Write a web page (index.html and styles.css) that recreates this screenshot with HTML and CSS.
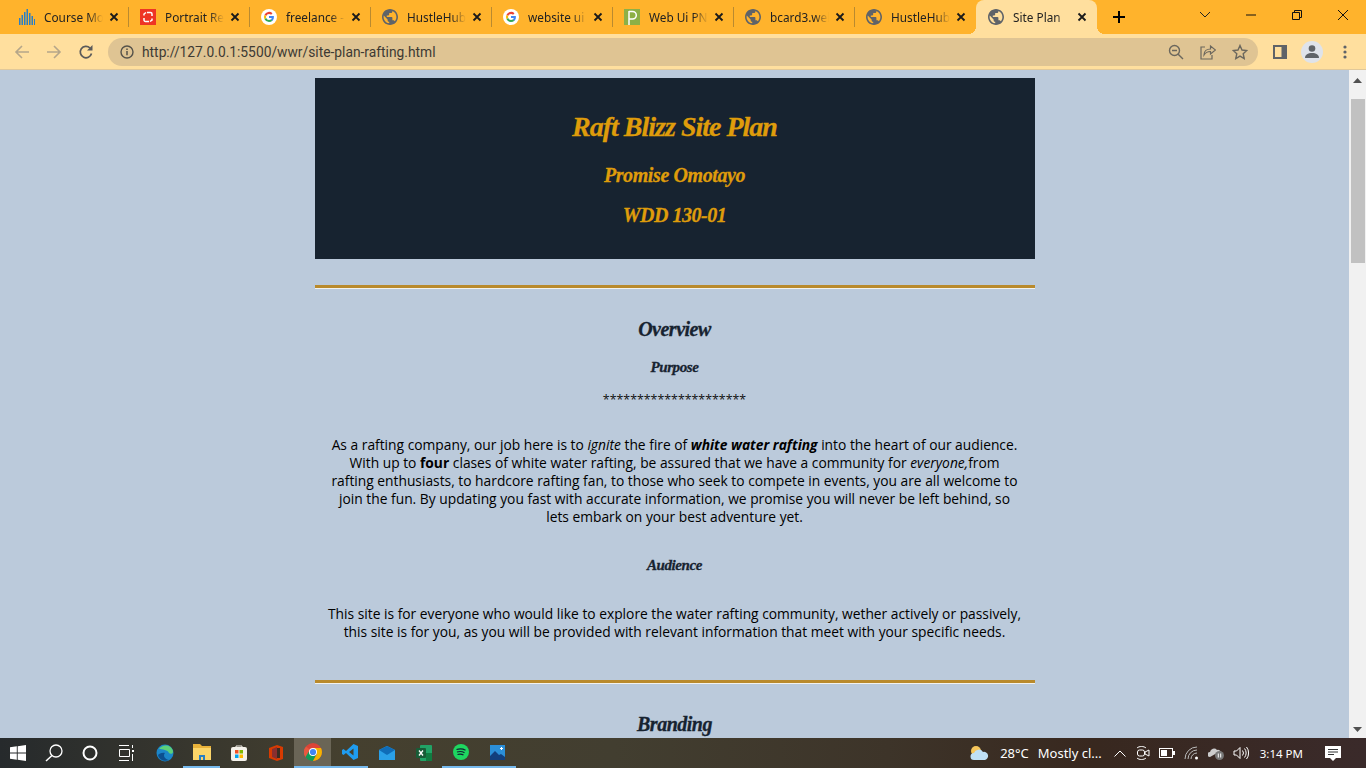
FILE: index.html
```html
<!DOCTYPE html>
<html lang="en">
<head>
  <meta charset="UTF-8">
  <meta name="viewport" content="width=device-width, initial-scale=1.0">
  <link rel="stylesheet" href="styles.css">
  <title>Site Plan</title>
</head>
<body>

<svg class="sprites" width="0" height="0">
  <symbol id="globe" viewBox="2 2 20 20">
    <path d="M12 2C6.48 2 2 6.48 2 12s4.48 10 10 10 10-4.48 10-10S17.52 2 12 2zm-1 17.93c-3.95-.49-7-3.85-7-7.93 0-.62.08-1.21.21-1.79L9 15v1c0 1.100.9 2 2 2v1.930zm6.900-2.540c-.26-.81-1-1.390-1.900-1.390h-1v-3c0-.55-.45-1-1-1H8v-2h2c.55 0 1-.45 1-1V7h2c1.100 0 2-.9 2-2v-.41c2.930 1.190 5 4.060 5 7.410 0 2.080-.8 3.970-2.100 5.390z" fill="#5f6368"/>
  </symbol>
  <symbol id="close" viewBox="0 0 10 10">
    <path d="M1.500 1.500l7 7M8.500 1.500l-7 7" stroke="#1a1a1a" stroke-width="1.800" fill="none"/>
  </symbol>
  <symbol id="google" viewBox="0 0 16 16">
    <circle cx="8" cy="8" r="8" fill="#fff"/>
    <path d="M8 4.900c.9 0 1.600.3 2.100.8l1.400-1.400A5 5 0 0 0 3.500 5.700l1.700 1.300A3 3 0 0 1 8 4.900z" fill="#ea4335"/>
    <path d="M12.900 8.100c0-.4 0-.7-.1-1H8v2h2.800c-.1.600-.5 1.200-1 1.500l1.600 1.300c.9-.9 1.500-2.200 1.500-3.800z" fill="#4285f4"/>
    <path d="M5.200 9A3 3 0 0 1 5.200 7L3.500 5.700a5 5 0 0 0 0 4.600z" fill="#fbbc05"/>
    <path d="M8 13c1.400 0 2.500-.4 3.400-1.200l-1.600-1.300c-.5.300-1.100.5-1.800.5A3 3 0 0 1 5.200 9l-1.700 1.300A5 5 0 0 0 8 13z" fill="#34a853"/>
  </symbol>
</svg>

<div class="tabstrip">
  <div class="tab">
    <svg class="favicon" viewBox="0 0 16 16"><path d="M0 9h1.500v7H0zM2.500 6H4v10H2.500zM5 3h1.500v13H5zM7.500 0H9v16H7.500zM10 4h1.500v12H10zM12.500 7H14v9h-1.500zM15 10h1v6h-1z" fill="#2a7fc4"/></svg>
    <span class="tab-title">Course Mo</span>
    <svg class="tab-close"><use href="#close"/></svg>
  </div>
  <div class="tab">
    <svg class="favicon" viewBox="0 0 16 16"><rect width="16" height="16" fill="#ee3524"/><path d="M7 3.500h3.500a1.500 1.500 0 0 1 1.500 1.500v2M9 12.500H5.500A1.500 1.500 0 0 1 4 11V9M4 6.500V5l2-1.500M12 9.500V11l-2 1.500" stroke="#fff" stroke-width="1.500" fill="none"/></svg>
    <span class="tab-title">Portrait Re</span>
    <svg class="tab-close"><use href="#close"/></svg>
  </div>
  <div class="tab">
    <svg class="favicon"><use href="#google"/></svg>
    <span class="tab-title">freelance -</span>
    <svg class="tab-close"><use href="#close"/></svg>
  </div>
  <div class="tab">
    <svg class="favicon"><use href="#globe"/></svg>
    <span class="tab-title">HustleHub</span>
    <svg class="tab-close"><use href="#close"/></svg>
  </div>
  <div class="tab">
    <svg class="favicon"><use href="#google"/></svg>
    <span class="tab-title">website ui</span>
    <svg class="tab-close"><use href="#close"/></svg>
  </div>
  <div class="tab">
    <svg class="favicon" viewBox="0 0 16 16"><rect width="16" height="16" fill="#8db046"/><path d="M5 16V2" stroke="#fff" stroke-width="1.500"/><path d="M5 2.500h3.500a3.800 3.800 0 0 1 0 7.600H5" stroke="#fff" stroke-width="1.500" fill="none"/></svg>
    <span class="tab-title">Web Ui PN</span>
    <svg class="tab-close"><use href="#close"/></svg>
  </div>
  <div class="tab">
    <svg class="favicon"><use href="#globe"/></svg>
    <span class="tab-title">bcard3.wel</span>
    <svg class="tab-close"><use href="#close"/></svg>
  </div>
  <div class="tab tab-last">
    <svg class="favicon"><use href="#globe"/></svg>
    <span class="tab-title">HustleHub</span>
    <svg class="tab-close"><use href="#close"/></svg>
  </div>
  <div class="tab tab-active">
    <svg class="favicon"><use href="#globe"/></svg>
    <span class="tab-title">Site Plan</span>
    <svg class="tab-close"><use href="#close"/></svg>
  </div>
  <svg class="new-tab" viewBox="0 0 12 12"><path d="M6 0v12M0 6h12" stroke="#000" stroke-width="2"/></svg>
  <div class="window-controls">
    <svg class="win-btn" viewBox="0 0 46 20"><path d="M18 10l5 5 5-5" transform="translate(0 -3)" stroke="#222" fill="none"/></svg>
    <svg class="win-btn" viewBox="0 0 46 20"><path d="M18 10h10" stroke="#111" fill="none"/></svg>
    <svg class="win-btn" viewBox="0 0 46 20"><path d="M18.500 7.500h7v7h-7zM20.500 7.500v-2h7v7h-2" stroke="#111" fill="none"/></svg>
    <svg class="win-btn" viewBox="0 0 46 20"><path d="M18 5l10 10M28 5l-10 10" stroke="#111" fill="none"/></svg>
  </div>
</div>

<div class="toolbar">
  <svg class="nav-icon" viewBox="0 0 16 16"><path d="M15 8H2M8 2L2 8l6 6" stroke="#b5a68a" stroke-width="1.600" fill="none"/></svg>
  <svg class="nav-icon" viewBox="0 0 16 16"><path d="M1 8h13M8 2l6 6-6 6" stroke="#b5a68a" stroke-width="1.600" fill="none"/></svg>
  <svg class="nav-icon" viewBox="0 0 16 16"><path d="M13.500 9.500A5.700 5.700 0 1 1 12 4" stroke="#5a5a5a" stroke-width="1.700" fill="none"/><path d="M14.500 1v5.500H9z" fill="#5a5a5a"/></svg>
  <div class="omnibox">
    <svg class="info-icon" viewBox="0 0 14 14"><circle cx="7" cy="7" r="6" stroke="#55524a" stroke-width="1.400" fill="none"/><path d="M7 6v4.200M7 3.500v1.400" stroke="#55524a" stroke-width="1.500"/></svg>
    <span class="url">http://127.0.0.1:5500/wwr/site-plan-rafting.html</span>
    <svg class="omni-icon" viewBox="0 0 16 16"><circle cx="6.500" cy="6.500" r="5" stroke="#6b675d" stroke-width="1.400" fill="none"/><path d="M4 6.500h5M10.200 10.200L15 15" stroke="#6b675d" stroke-width="1.400"/></svg>
    <svg class="omni-icon" viewBox="0 0 16 16"><path d="M5 3H1v12h11v-4" stroke="#6b675d" stroke-width="1.200" fill="none"/><path d="M4 11c0-4 3-6 6.500-6V2L15.500 6l-5 4V7.500C8 7.500 5.500 8.500 4 11z" stroke="#6b675d" stroke-width="1.200" fill="none"/></svg>
    <svg class="omni-icon" viewBox="0 0 16 16"><path d="M8 1.500l2 4.500 4.800.5-3.600 3.200 1 4.800L8 12.100l-4.200 2.400 1-4.800L1.200 6.500 6 6z" stroke="#6b675d" stroke-width="1.400" fill="none"/></svg>
  </div>
  <svg class="side-panel" viewBox="0 0 14 14"><path d="M0 0h14v14H0z" fill="#5f6368"/><path d="M2 2h6.500v10H2z" fill="#ffdf9e"/></svg>
  <div class="avatar">
    <svg viewBox="0 0 14 14" width="14" height="14"><circle cx="7" cy="3.500" r="3.300" fill="#5f6368"/><path d="M0 13c0-3.500 3-5 7-5s7 1.500 7 5z" fill="#5f6368"/></svg>
  </div>
  <svg class="kebab" viewBox="0 0 4 14"><circle cx="2" cy="2" r="1.600" fill="#5f6368"/><circle cx="2" cy="7" r="1.600" fill="#5f6368"/><circle cx="2" cy="12" r="1.600" fill="#5f6368"/></svg>
</div>

<div class="viewport">
  <main class="page">
    <header class="site-header">
      <h1>Raft Blizz Site Plan</h1>
      <h2 class="author">Promise Omotayo</h2>
      <h2 class="course">WDD 130-01</h2>
    </header>

    <hr class="rule">

    <section class="overview">
      <h2 class="section-title">Overview</h2>
      <h3>Purpose</h3>
      <p class="stars">*********************</p>
      <p class="copy">As a rafting company, our job here is to <em>ignite</em> the fire of <strong><em>white water rafting</em></strong> into the heart of our audience. With up to <strong>four</strong> clases of white water rafting, be assured that we have a community for <em>everyone,</em>from rafting enthusiasts, to hardcore rafting fan, to those who seek to compete in events, you are all welcome to join the fun. By updating you fast with accurate information, we promise you will never be left behind, so lets embark on your best adventure yet.</p>
      <h3 class="audience">Audience</h3>
      <p class="copy audience-copy">This site is for everyone who would like to explore the water rafting community, wether actively or passively, this site is for you, as you will be provided with relevant information that meet with your specific needs.</p>
    </section>

    <hr class="rule rule-2">

    <h2 class="section-title">Branding</h2>
  </main>

  <div class="scrollbar">
    <svg class="arrow" viewBox="0 0 9 5"><path d="M0 5l4.500-5L9 5z" fill="#505050"/></svg>
    <div class="thumb"></div>
    <svg class="arrow" viewBox="0 0 9 5"><path d="M0 0l4.500 5L9 0z" fill="#505050"/></svg>
  </div>
</div>

<div class="taskbar">
  <div class="sys-btn">
    <svg width="16" height="16" viewBox="0 0 16 16"><path d="M0 2.300l6.800-1v6.300H0zM7.700 1.200L16 0v7.600H7.700zM0 8.400h6.800v6.300l-6.800-1zM7.700 8.400H16V16l-8.300-1.200z" fill="#fff"/></svg>
  </div>
  <div class="sys-btn">
    <svg width="18" height="18" viewBox="0 0 18 18"><circle cx="11" cy="7" r="6" stroke="#fff" stroke-width="1.300" fill="none"/><path d="M7 11.500L1 17" stroke="#fff" stroke-width="1.500"/></svg>
  </div>
  <div class="sys-btn">
    <svg width="16" height="16" viewBox="0 0 16 16"><circle cx="8" cy="8" r="6.500" stroke="#fff" stroke-width="2" fill="none"/></svg>
  </div>
  <div class="sys-btn">
    <svg width="16" height="16" viewBox="0 0 16 16"><path d="M1 .5h10M1 15.500h10M1.500 4.500h10v7h-10z" stroke="#fff" fill="none"/><path d="M14 5h2v2h-2z" fill="#fff"/><path d="M14.500 0v3M14.500 9v7" stroke="#fff"/></svg>
  </div>
  <div class="app-list">
    <div class="app">
      <svg width="18" height="18" viewBox="0 0 18 18"><circle cx="9" cy="9" r="8.500" fill="#1b86c9"/><path d="M3 5c3-5 12-5 14 2 .5 3-3 3.500-4 2-1-3-7-4-10-4z" fill="#5bd07a"/><path d="M9 9c-2 2-1 6 4 7-4 2-10 0-11-5 1-1 4-3 7-2z" fill="#0c4f8f"/></svg>
    </div>
    <div class="app app-open">
      <svg width="18" height="16" viewBox="0 0 18 16"><path d="M0 0h7l2 2h9v14H0z" fill="#e9b23a"/><path d="M0 4h18v12H0z" fill="#fbd569"/><path d="M6 16v-5h6v5h-2v-3H8v3z" fill="#2a7fc4"/></svg>
    </div>
    <div class="app">
      <svg width="16" height="16" viewBox="0 0 16 16"><rect y="2" width="16" height="14" rx="2" fill="#f4f1ea"/><path d="M5 3V1h6v2" stroke="#f4f1ea" fill="none"/><path d="M4 5h3.500v3.500H4z" fill="#f25022"/><path d="M8.500 5H12v3.500H8.500z" fill="#7fba00"/><path d="M4 9.500h3.500V13H4z" fill="#00a4ef"/><path d="M8.500 9.500H12V13H8.500z" fill="#ffb900"/></svg>
    </div>
    <div class="app">
      <svg width="14" height="16" viewBox="0 0 14 16"><path d="M8 0l6 2v12l-6 2-8-3V3z" fill="#d83b01"/><path d="M3 4l5-2v12l-5-2z" fill="#8a2f2f"/><path d="M8 3h3v10H8z" fill="#3b2b20"/></svg>
    </div>
    <div class="app app-active">
      <svg width="18" height="18" viewBox="0 0 18 18"><circle cx="9" cy="9" r="9" fill="#db4437"/><path d="M9 9L1.800 14.500A9 9 0 0 1 2 3.500z" fill="#e9573f"/><path d="M9 18a9 9 0 0 1-7.500-4L5.500 7.500 9 9l4 1z" fill="#0f9d58"/><path d="M9 5h8a9 9 0 0 1-8 13l4-7z" fill="#f4b400"/><circle cx="9" cy="9" r="4" fill="#fff"/><circle cx="9" cy="9" r="3.100" fill="#4285f4"/></svg>
    </div>
    <div class="app app-open">
      <svg width="16" height="16" viewBox="0 0 16 16"><path d="M11.500 0L16 2v12l-4.500 2L4 9l-2.500 2L0 10V6l1.500-1L4 7zM11.500 4.500L7 8l4.500 3.500z" fill="#1f9cf0"/></svg>
    </div>
    <div class="app">
      <svg width="16" height="14" viewBox="0 0 16 14"><path d="M0 4l8-4 8 4v10H0z" fill="#2aa0e8"/><path d="M0 4l8 5 8-5-8-4z" fill="#0f6cb8"/></svg>
    </div>
    <div class="app">
      <svg width="16" height="16" viewBox="0 0 16 16"><rect x="4" width="12" height="16" rx="1" fill="#21a366"/><rect x="10" y="8" width="6" height="8" fill="#107c41"/><rect y="3" width="10" height="10" rx="1" fill="#185c37"/><path d="M3 5.500l4 5M7 5.500l-4 5" stroke="#fff" stroke-width="1.300"/></svg>
    </div>
    <div class="app app-open">
      <svg width="16" height="16" viewBox="0 0 16 16"><circle cx="8" cy="8" r="8" fill="#1ed760"/><path d="M3.500 5.500c3-1 6.500-.7 9 .7M4 8c2.500-.8 5.500-.5 7.500.7M4.500 10.500c2-.6 4.500-.4 6 .6" stroke="#123" stroke-width="1.200" fill="none"/></svg>
    </div>
    <div class="app app-open">
      <svg width="15" height="15" viewBox="0 0 15 15"><rect width="15" height="15" fill="#2b8fd8"/><path d="M0 15V11l5-5 4 4 2-1 4 3v3z" fill="#123f7d"/><path d="M10 3h3v1h-3zM11 2h1v3h-1z" fill="#fff"/></svg>
    </div>
  </div>

  <div class="tray">
    <svg class="weather" width="20" height="16" viewBox="0 0 20 16"><circle cx="7" cy="6" r="5" fill="#f6c65b"/><path d="M5 15a3.500 3.500 0 0 1 0-7 5 5 0 0 1 9-1 4 4 0 0 1 2 8z" fill="#bfe0f5"/></svg>
    <span class="temp">28°C</span>
    <span class="forecast">Mostly cl...</span>
    <svg class="chevron" width="12" height="7" viewBox="0 0 12 7"><path d="M.5 6.500L6 1l5.500 5.500" stroke="#fff" fill="none"/></svg>
    <svg class="tray-icon" width="14" height="16" viewBox="0 0 14 16"><path d="M1 3c2-2 7-2 9 0M1 13c2 2 7 2 9 0" stroke="#fff" fill="none"/><rect x="1.500" y="5" width="7" height="6" rx="2" stroke="#fff" fill="none"/><path d="M9 7l4-2v6l-4-2z" stroke="#fff" fill="none"/></svg>
    <svg class="tray-icon" width="16" height="10" viewBox="0 0 16 10"><rect x=".5" y=".5" width="13" height="9" stroke="#fff" fill="none"/><path d="M2 2h6v6H2z" fill="#fff"/><path d="M14 3h2v4h-2z" fill="#fff"/></svg>
    <svg class="tray-icon" width="15" height="14" viewBox="0 0 15 14"><path d="M1 13A12 12 0 0 1 13 1M4 13a9 9 0 0 1 9-9M7 13a6 6 0 0 1 6-6" stroke="#bbb" fill="none"/><circle cx="12.500" cy="12" r="1.500" fill="#fff"/></svg>
    <svg class="tray-icon" width="16" height="13" viewBox="0 0 16 13"><path d="M2 10a2.500 2.500 0 0 1 0-5 4 4 0 0 1 7-2 3 3 0 0 1 4 3H9z" fill="#ccc"/><circle cx="11.500" cy="8.500" r="4.500" fill="#777"/><path d="M10.300 6.500v4M12.700 6.500v4" stroke="#fff"/></svg>
    <svg class="tray-icon" width="16" height="14" viewBox="0 0 16 14"><path d="M1 5h2.500L7 1.500v11L3.500 9H1zM9.500 4.500a4 4 0 0 1 0 5M11.500 2.500a7 7 0 0 1 0 9M13.500 1a9.500 9.500 0 0 1 0 12" stroke="#fff" fill="none"/></svg>
    <span class="clock">3:14 PM</span>
    <svg class="notify" width="16" height="15" viewBox="0 0 16 15"><path d="M0 0h16v12h-5l-3 3-3-3H0z" fill="#fff"/><path d="M3 3.500h10M3 6h10M3 8.500h6" stroke="#333"/></svg>
  </div>
</div>

</body>
</html>
```
FILE: styles.css
```css
body {
  margin: 0;
  height: 768px;
  display: flex;
  flex-direction: column;
  overflow: hidden;
  font-family: 'Open Sans', sans-serif;
  background-color: #bbcadb;
}

.sprites {
  position: absolute;
}

/* Browser tabs */
.tabstrip {
  height: 34px;
  display: flex;
  flex-shrink: 0;
  padding-left: 8px;
  background-color: #ffb32c;
}

.tab {
  position: relative;
  width: 121px;
  height: 34px;
  box-sizing: border-box;
  display: flex;
  align-items: center;
  padding: 0 10px 0 11px;
  font-family: 'Noto Sans', sans-serif;
  font-size: 11.8px;
  color: #222;
}

/* separator between tabs */
.tab::after {
  content: '';
  position: absolute;
  top: 7px;
  right: 0;
  width: 1px;
  height: 20px;
  background-color: #b98a30;
}

.tab-last::after {
  display: none;
}

.tab-active {
  border-radius: 8px 8px 0 0;
  background-color: #ffdf9e;
  padding-left: 12px;
}

/* little flares at the foot of the open tab */
.tab-active::before,
.tab-active::after {
  content: '';
  position: absolute;
  top: auto;
  bottom: 0;
  width: 8px;
  height: 8px;
  background-color: transparent;
}

.tab-active::before {
  left: -8px;
  background-image: radial-gradient(circle at 0 0, transparent 8px, #ffdf9e 8px);
}

.tab-active::after {
  right: -8px;
  background-image: radial-gradient(circle at 100% 0, transparent 8px, #ffdf9e 8px);
}

.favicon {
  width: 16px;
  height: 16px;
  flex-shrink: 0;
  margin-right: 9px;
}

.tab-title {
  flex: 1;
  overflow: hidden;
  white-space: nowrap;
  -webkit-mask-image: linear-gradient(to right, #000 75%, transparent 100%);
  mask-image: linear-gradient(to right, #000 75%, transparent 100%);
}

.tab-close {
  width: 10px;
  height: 10px;
  flex-shrink: 0;
  margin-left: 6px;
}

.new-tab {
  width: 12px;
  height: 12px;
  margin: 11px 0 0 16px;
}

.window-controls {
  display: flex;
  margin-left: auto;
}

.win-btn {
  width: 46px;
  height: 30px;
}

/* Address bar */
.toolbar {
  height: 36px;
  flex-shrink: 0;
  box-sizing: border-box;
  display: flex;
  align-items: center;
  padding-left: 14px;
  background-color: #ffdf9e;
  border-bottom: 1px solid #e0c89a;
}

.nav-icon {
  width: 16px;
  height: 16px;
  margin-right: 16px;
}

.omnibox {
  width: 1150px;
  height: 28px;
  margin-left: -2px;
  display: flex;
  align-items: center;
  padding: 0 10px 0 12px;
  box-sizing: border-box;
  border-radius: 14px;
  background-color: #dfc493;
}

.info-icon {
  width: 14px;
  height: 14px;
  margin-right: 8px;
}

.url {
  flex: 1;
  font-family: 'Roboto', sans-serif;
  font-size: 13.8px;
  color: #3d3a33;
}

.omni-icon {
  width: 16px;
  height: 16px;
  margin-left: 16px;
}

.side-panel {
  width: 14px;
  height: 14px;
  margin-left: 15px;
}

.avatar {
  width: 22px;
  height: 22px;
  margin-left: 14px;
  display: flex;
  align-items: center;
  justify-content: center;
  border-radius: 50%;
  background-color: #dfe3ea;
}

.kebab {
  width: 4px;
  height: 14px;
  margin-left: 20px;
}

/* Page content */
.viewport {
  flex: 1;
  min-height: 0;
  display: flex;
  overflow: hidden;
}

.page {
  flex: 1;
  min-width: 0;
}

.site-header {
  width: 720px;
  height: 181px;
  box-sizing: border-box;
  margin: 8px auto 0;
  padding-top: 32px;
  text-align: center;
  background-color: #172330;
  color: #df9c0b;
}

h1, h2, h3 {
  font-family: 'Liberation Serif', serif;
  font-style: italic;
  font-weight: bold;
  margin: 0;
  text-align: center;
  -webkit-text-stroke: 0.3px currentColor;
}

.site-header h1 {
  font-size: 28px;
  line-height: 34px;
  letter-spacing: -1px;
  margin-bottom: 18px;
}

.site-header h2 {
  font-size: 20px;
  line-height: 26px;
  margin-bottom: 14px;
}

.author {
  letter-spacing: -0.4px;
}

.course {
  letter-spacing: -0.5px;
}

.rule {
  width: 720px;
  height: 4px;
  box-sizing: border-box;
  margin: 26px auto 0;
  border: 0;
  border-top: 3px solid #b98a2c;
  border-bottom: 1px solid #f2f2ee;
}

.section-title {
  font-size: 20px;
  line-height: 26px;
  letter-spacing: -0.5px;
  color: #172330;
}

.overview {
  margin: 27px auto 0;
}

h3 {
  font-size: 15px;
  line-height: 20px;
  letter-spacing: -0.4px;
  margin-top: 15px;
  color: #172330;
}

.stars {
  margin: 14px 0 0;
  text-align: center;
  font-size: 12.4px;
  line-height: 18px;
  color: #111;
}

.copy {
  width: 695px;
  margin: 27px auto 0;
  text-align: center;
  font-size: 13.8px;
  line-height: 18px;
  color: #000;
}

.audience {
  margin-top: 29px;
}

.audience-copy {
  margin-top: 30px;
}

.rule-2 {
  margin-top: 39px;
  margin-bottom: 27px;
}

.scrollbar {
  width: 17px;
  box-sizing: border-box;
  flex-shrink: 0;
  display: flex;
  flex-direction: column;
  align-items: center;
  padding: 8px 0 6px;
  background-color: #f1f1f1;
}

.arrow {
  width: 9px;
  height: 5px;
  flex-shrink: 0;
}

.thumb {
  width: 14px;
  height: 164px;
  margin-top: 16px;
  margin-bottom: auto;
  background-color: #c1c1c1;
}

/* Windows taskbar */
.taskbar {
  height: 30px;
  flex-shrink: 0;
  display: flex;
  align-items: center;
  color: #fff;
  background: linear-gradient(to right, #262a2c 0, #45402f 25%, #423e30 45%, #3d3429 65%, #38281f 80%, #3a2a2a 100%);
}

.sys-btn {
  width: 36px;
  height: 30px;
  display: flex;
  align-items: center;
  justify-content: center;
}

.app-list {
  display: flex;
  margin-left: 2px;
}

.app {
  width: 37px;
  height: 30px;
  box-sizing: border-box;
  display: flex;
  align-items: center;
  justify-content: center;
}

.app-open {
  border-bottom: 2px solid #76b9ed;
}

.app-active {
  border-bottom: 2px solid #76b9ed;
  background-color: #6a6556;
}

.tray {
  margin-left: auto;
  display: flex;
  align-items: center;
  font-family: 'Noto Sans', sans-serif;
  font-size: 13px;
}

.weather {
  margin-right: 11px;
}

.forecast {
  margin-left: 9px;
  margin-right: 12px;
}

.chevron {
  margin-right: 1px;
}

.tray-icon {
  margin-left: 9px;
}

.clock {
  margin-left: 11px;
  font-size: 11.5px;
}

.notify {
  margin: 0 25px 0 22px;
}
```
